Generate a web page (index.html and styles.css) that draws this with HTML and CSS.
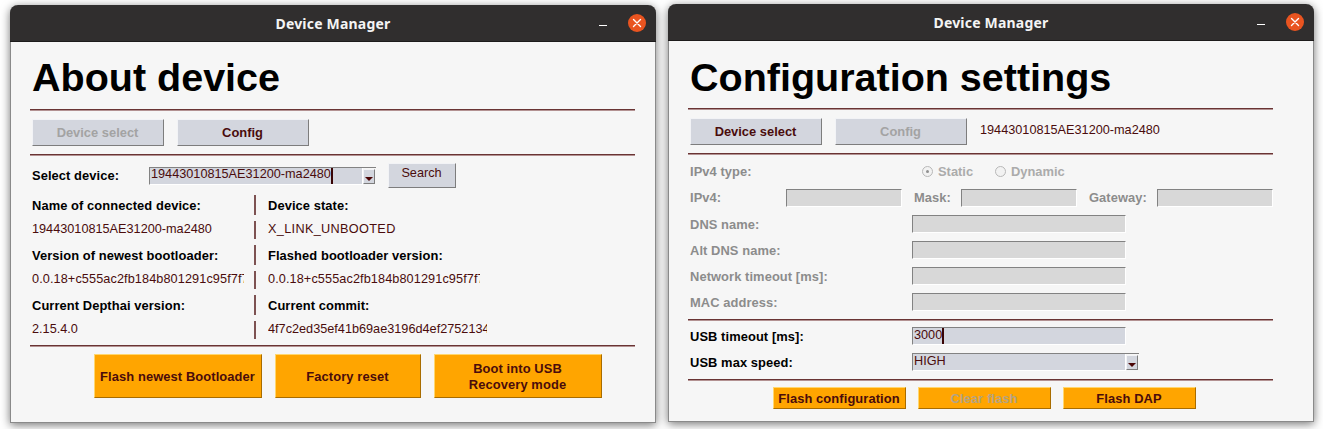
FILE: index.html
```html
<!DOCTYPE html>
<html lang="en">
<head>
  <meta charset="UTF-8" />
  <title>Device Manager</title>
  <link rel="stylesheet" href="styles.css">
</head>
<body>

  <!-- About device -->
  <div class="window window-about">
    <div class="titlebar">
      <span class="title">Device Manager</span>
      <span class="minimize"></span>
      <svg class="close" width="18" height="18" viewBox="0 0 18 18">
        <circle cx="9" cy="9" r="9" fill="#e95420"/>
        <path d="M5.5 5.5 L12.5 12.5 M12.5 5.5 L5.5 12.5" stroke="#fff" stroke-width="1.4" stroke-linecap="round"/>
      </svg>
    </div>
    <div class="content">
      <h1>About device</h1>
      <div class="rule"></div>
      <div class="toolbar">
        <button class="tab off">Device select</button>
        <button class="tab">Config</button>
      </div>
      <div class="rule"></div>

      <div class="select-row">
        <label class="bold select-label">Select device:</label>
        <div class="combo combo-device">
          <div class="field"><span class="field-text">19443010815AE31200-ma2480</span><i class="caret"></i></div>
          <span class="arrow-btn"><i class="arrow"></i></span>
        </div>
        <button class="search">Search</button>
      </div>

      <div class="info">
        <div class="cell bold">Name of connected device:</div>
        <div class="cell side bold">Device state:</div>
        <div class="cell value">19443010815AE31200-ma2480</div>
        <div class="cell side value state">X_LINK_UNBOOTED</div>
        <div class="cell bold">Version of newest bootloader:</div>
        <div class="cell side bold">Flashed bootloader version:</div>
        <div class="cell value"><span class="clip hash">0.0.18+c555ac2fb184b801291c95f7f7</span></div>
        <div class="cell side value"><span class="clip hash">0.0.18+c555ac2fb184b801291c95f7f7</span></div>
        <div class="cell bold">Current Depthai version:</div>
        <div class="cell side bold">Current commit:</div>
        <div class="cell value">2.15.4.0</div>
        <div class="cell side value"><span class="clip clip-wide">4f7c2ed35ef41b69ae3196d4ef27521345</span></div>
      </div>

      <div class="rule"></div>
      <div class="actions actions-about">
        <button class="action w168">Flash newest Bootloader</button>
        <button class="action w146">Factory reset</button>
        <button class="action w168">Boot into USB<br>Recovery mode</button>
      </div>
    </div>
  </div>

  <!-- Configuration settings -->
  <div class="window window-config">
    <div class="titlebar">
      <span class="title">Device Manager</span>
      <span class="minimize"></span>
      <svg class="close" width="18" height="18" viewBox="0 0 18 18">
        <circle cx="9" cy="9" r="9" fill="#e95420"/>
        <path d="M5.5 5.5 L12.5 12.5 M12.5 5.5 L5.5 12.5" stroke="#fff" stroke-width="1.4" stroke-linecap="round"/>
      </svg>
    </div>
    <div class="content">
      <h1>Configuration settings</h1>
      <div class="rule"></div>
      <div class="toolbar">
        <button class="tab">Device select</button>
        <button class="tab off">Config</button>
        <span class="device-name">19443010815AE31200-ma2480</span>
      </div>
      <div class="rule"></div>

      <div class="form">
        <div class="row">
          <label class="bold row-label dim lift">IPv4 type:</label>
          <div class="radios lift">
            <span class="radio checked"></span><span class="radio-text">Static</span>
            <span class="radio"></span><span class="radio-text">Dynamic</span>
          </div>
        </div>
        <div class="row">
          <label class="bold dim lbl-ip lift">IPv4:</label>
          <div class="field small off"></div>
          <label class="bold dim lbl-mask lift">Mask:</label>
          <div class="field small off"></div>
          <label class="bold dim lbl-gate lift">Gateway:</label>
          <div class="field small off"></div>
        </div>
        <div class="row">
          <label class="bold row-label dim">DNS name:</label>
          <div class="field wide off"></div>
        </div>
        <div class="row">
          <label class="bold row-label dim">Alt DNS name:</label>
          <div class="field wide off"></div>
        </div>
        <div class="row">
          <label class="bold row-label dim">Network timeout [ms]:</label>
          <div class="field wide off"></div>
        </div>
        <div class="row">
          <label class="bold row-label dim">MAC address:</label>
          <div class="field wide off"></div>
        </div>
      </div>

      <div class="rule"></div>
      <div class="form form-usb">
        <div class="row">
          <label class="bold row-label">USB timeout [ms]:</label>
          <div class="field wide"><span class="field-text">3000</span><i class="caret"></i></div>
        </div>
        <div class="row">
          <label class="bold row-label">USB max speed:</label>
          <div class="combo combo-speed">
            <div class="field"><span class="field-text">HIGH</span></div>
            <span class="arrow-btn"><i class="arrow"></i></span>
          </div>
        </div>
      </div>
      <div class="rule"></div>

      <div class="actions actions-config">
        <button class="action slim">Flash configuration</button>
        <button class="action slim off">Clear flash</button>
        <button class="action slim">Flash DAP</button>
      </div>
    </div>
  </div>

</body>
</html>
```

FILE: styles.css
```css
body {
  margin: 0;
  height: 429px;
  box-sizing: border-box;
  padding: 4px 0 0 10px;
  background: #fff;
  display: flex;
  gap: 12px;
  align-items: flex-start;
  overflow: hidden;
  font-family: "Liberation Sans", Arial, sans-serif;
  font-size: 12.7px;
  color: #4a0c0c;
}

.window {
  width: 646px;
  height: 418px;
  box-sizing: border-box;
  background: #f6f6f6;
  border: 1px solid #8a8a8a;
  border-top: none;
  border-radius: 8px 8px 0 0;
  box-shadow: 0 2px 10px rgba(0, 0, 0, 0.55);
}

.window-about {
  margin-top: 1px;
}

.titlebar {
  height: 37px;
  box-sizing: border-box;
  margin: 0 -1px;
  background: #302e2e;
  border-bottom: 1px solid #1d1b1b;
  border-radius: 8px 8px 0 0;
  color: #f4f4f4;
  display: flex;
  align-items: center;
  justify-content: center;
  position: relative;
}

.title {
  font-family: "Noto Sans", sans-serif;
  font-weight: 700;
  font-size: 14px;
  letter-spacing: 0.2px;
}

.minimize {
  position: absolute;
  left: 589px;
  top: 20px;
  width: 8px;
  height: 1px;
  background: #fff;
}

.close {
  position: absolute;
  left: 618px;
  top: 9px;
}

.content {
  padding: 0 20px 0 19px;
}

.window-config .content {
  padding-right: 40px;
}

h1 {
  margin: 0;
  height: 67px;
  padding-left: 2px;
  box-sizing: border-box;
  font-size: 39.5px;
  line-height: 70px;
  font-weight: 700;
  color: #000;
}

.window-config h1 {
  line-height: 72px;
}

.rule {
  height: 0;
  border-top: 1px solid #693434;
  border-bottom: 1px solid #b39292;
}

.bold {
  font-weight: 700;
  color: #000;
  font-size: 12.9px;
  letter-spacing: 0.08px;
}

.dim {
  color: #8c8c8c;
}

/* text that sits a pixel above the middle of its row */
.lift {
  margin-bottom: 2px;
}

button {
  font-family: inherit;
  padding: 0;
  border-radius: 0;
  cursor: default;
  box-sizing: border-box;
  border-style: solid;
  border-width: 1px;
}

.toolbar {
  display: flex;
  align-items: center;
  gap: 13px;
  padding: 8px 0 8px 2px;
}

.tab {
  width: 132px;
  height: 27px;
  padding-right: 1px;
  background: #d3d6de;
  border-color: #f2f3f6 #7d7d7d #7d7d7d #f2f3f6;
  font-size: 12.9px;
  font-weight: 700;
  color: #4a0c0c;
}

.tab.off {
  color: #a3a3a3;
}

.device-name {
  margin-bottom: 4px;
}

.select-row {
  height: 39px;
  display: flex;
  align-items: center;
  padding-left: 2px;
}

.select-label {
  width: 117px;
}

.search {
  margin-left: 12px;
  margin-bottom: 1px;
  width: 68px;
  height: 25px;
  padding: 0 1px 4px 0;
  background: #d3d6de;
  border-color: #f2f3f6 #7d7d7d #7d7d7d #f2f3f6;
  font-size: 12.7px;
  color: #4a0c0c;
}

/* entry boxes */
.field {
  height: 18px;
  box-sizing: border-box;
  background: #d3d6de;
  border: 1px solid;
  border-color: #828282 #fff #fff #828282;
  display: flex;
  align-items: flex-start;
  line-height: 14px;
  overflow: hidden;
}

.field.off {
  background: #d8d8d8;
}

.field.small {
  width: 116px;
}

.field.wide {
  width: 214px;
}

.field-text {
  padding-left: 1px;
}

.caret {
  width: 2px;
  height: 16px;
  background: #3a0505;
}

.combo {
  height: 18px;
  display: flex;
  border-top: 1px solid #828282;
  box-sizing: border-box;
  position: relative;
}

.combo .field {
  flex: 1;
  border-top: none;
  height: 17px;
}

.combo-device {
  width: 227px;
}

.combo-device .field {
  line-height: 12px;
}

.combo-speed {
  width: 227px;
}

.arrow-btn {
  width: 12px;
  height: 15px;
  margin-top: 1px;
  margin-right: 1px;
  box-sizing: border-box;
  background: #d3d6de;
  border: 1px solid;
  border-color: #f2f3f6 #7d7d7d #7d7d7d #f2f3f6;
  display: flex;
  align-items: flex-end;
  justify-content: center;
  padding-bottom: 2px;
}

.arrow {
  width: 0;
  height: 0;
  border-left: 4px solid transparent;
  border-right: 4px solid transparent;
  border-top: 4px solid #4a0505;
}

/* two column info table */
.info {
  display: grid;
  grid-template-columns: 224px 1fr;
  grid-template-rows: 20px 18px 20px 18px 20px 18px;
  row-gap: 6px;
  margin-bottom: 6px;
}

.cell {
  padding-left: 2px;
  display: flex;
  align-items: center;
  white-space: nowrap;
}

.cell.value {
  color: #4a0c0c;
  padding-bottom: 2px;
  box-sizing: border-box;
}

.cell.side {
  border-left: 2px solid #7d5252;
  padding-left: 12px;
}

.state {
  letter-spacing: 0.33px;
}

.clip {
  display: block;
  width: 212px;
  overflow: hidden;
}

.clip-wide {
  width: 219px;
}

.hash {
  letter-spacing: 0.1px;
}

/* orange buttons */
.actions {
  display: flex;
}

.actions-about {
  padding: 7px 0 0 64px;
  gap: 13px;
}

.actions-config {
  padding: 6px 0 0 85px;
  gap: 12px;
}

.action {
  height: 44px;
  padding: 2px 1px 0 0;
  background: #ffa500;
  border-color: #ffd76e #a86c00 #a86c00 #ffd76e;
  color: #4a0c0c;
  font-size: 12.9px;
  line-height: 16px;
  font-weight: 700;
  letter-spacing: 0.1px;
}

.w168 {
  width: 168px;
}

.w146 {
  width: 146px;
}

.action.slim {
  width: 133px;
  height: 22px;
}

.action.off {
  color: #b3a383;
}

/* config form */
.form {
  display: flex;
  flex-direction: column;
  gap: 8px;
  padding: 8px 0 8px 2px;
}

.form-usb {
  padding-top: 6px;
}

.row {
  height: 18px;
  display: flex;
  align-items: center;
}

.row-label {
  width: 222px;
}

.lbl-ip {
  width: 96px;
}

.lbl-mask {
  width: 47px;
  margin-left: 12px;
}

.lbl-gate {
  width: 68px;
  margin-left: 12px;
}

.radios {
  display: flex;
  align-items: center;
  margin-left: 10px;
}

.radio {
  width: 9px;
  height: 9px;
  border: 1px solid #b8b8b8;
  border-radius: 50%;
  background: #f2f2f2;
  display: flex;
  align-items: center;
  justify-content: center;
}

.radio.checked::after {
  content: "";
  width: 3px;
  height: 3px;
  border-radius: 50%;
  background: #909090;
}

.radio-text {
  margin-left: 5px;
  width: 57px;
  font-weight: 700;
  font-size: 12.9px;
  color: #ababab;
}
```
